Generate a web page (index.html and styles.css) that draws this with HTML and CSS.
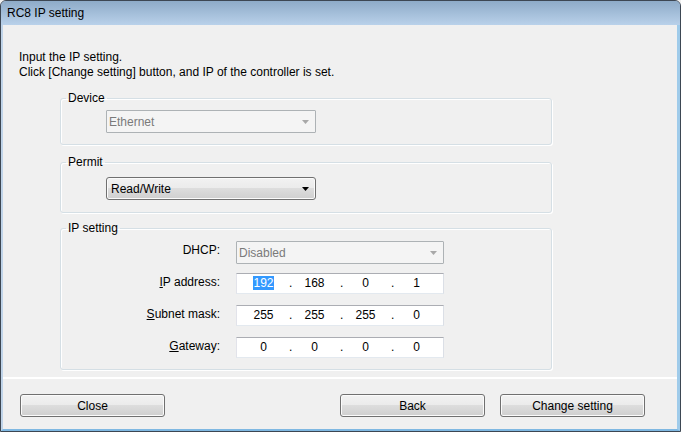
FILE: index.html
```html
<!DOCTYPE html>
<html>
<head>
<meta charset="utf-8">
<title>RC8 IP setting</title>
<link rel="stylesheet" href="styles.css">
</head>
<body>
<div class="window">
  <div class="titlebar">RC8 IP setting</div>
  <div class="client">
    <div class="main">
      <p class="intro">Input the IP setting.<br>Click [Change setting] button, and IP of the controller is set.</p>

      <fieldset class="group group-device">
        <legend>Device</legend>
        <div class="group-body body-device">
          <div class="combo combo-disabled combo-wide">
            <span class="combo-text">Ethernet</span>
            <svg class="arrow" width="7" height="4" viewBox="0 0 7 4"><path d="M0 0H7L3.5 4Z"/></svg>
          </div>
        </div>
      </fieldset>

      <fieldset class="group group-permit">
        <legend>Permit</legend>
        <div class="group-body body-permit">
          <div class="combo combo-list combo-wide">
            <span class="combo-text">Read/Write</span>
            <svg class="arrow" width="7" height="4" viewBox="0 0 7 4"><path d="M0 0H7L3.5 4Z"/></svg>
          </div>
        </div>
      </fieldset>

      <fieldset class="group group-ip">
        <legend>IP setting</legend>
        <div class="group-body body-ip">
          <div class="field-label">DHCP:</div>
          <div class="combo combo-disabled combo-ip">
            <span class="combo-text">Disabled</span>
            <svg class="arrow" width="7" height="4" viewBox="0 0 7 4"><path d="M0 0H7L3.5 4Z"/></svg>
          </div>

          <div class="field-label"><u>I</u>P address:</div>
          <div class="ipfield">
            <span class="octet"><span class="selected">192</span></span><span class="dot">.</span>
            <span class="octet">168</span><span class="dot">.</span>
            <span class="octet">0</span><span class="dot">.</span>
            <span class="octet">1</span>
          </div>

          <div class="field-label"><u>S</u>ubnet mask:</div>
          <div class="ipfield">
            <span class="octet">255</span><span class="dot">.</span>
            <span class="octet">255</span><span class="dot">.</span>
            <span class="octet">255</span><span class="dot">.</span>
            <span class="octet">0</span>
          </div>

          <div class="field-label"><u>G</u>ateway:</div>
          <div class="ipfield">
            <span class="octet">0</span><span class="dot">.</span>
            <span class="octet">0</span><span class="dot">.</span>
            <span class="octet">0</span><span class="dot">.</span>
            <span class="octet">0</span>
          </div>
        </div>
      </fieldset>
    </div>

    <div class="footer">
      <button class="btn">Close</button>
      <div class="footer-right">
        <button class="btn">Back</button>
        <button class="btn">Change setting</button>
      </div>
    </div>
  </div>
</div>
</body>
</html>
```

FILE: styles.css
```css
* {
  box-sizing: border-box;
}

html, body {
  margin: 0;
  padding: 0;
}

body {
  width: 681px;
  height: 432px;
  overflow: hidden;
  font-family: "Liberation Sans", Arial, sans-serif;
  font-size: 12px;
  color: #000;
  background: #f0f0f0;
}

.window {
  width: 681px;
  height: 432px;
  display: flex;
  flex-direction: column;
  border: 1px solid #3d4753;
  border-radius: 6px 6px 0 0;
  overflow: hidden;
  background: #bcd1e7;
}

.titlebar {
  height: 24px;
  flex: none;
  padding: 1px 0 0 6px;
  line-height: 23px;
  background: linear-gradient(#8eabc8, #b9d1ea);
  color: #000;
}

.client {
  flex: 1;
  display: flex;
  flex-direction: column;
  background: #f0f0f0;
  border-left: 2px solid #c0d4e9;
  border-right: 3px solid #9fcbea;
  border-bottom: 2px solid #7fb8e2;
}

.main {
  flex: 1;
  padding: 25px 0 0 16px;
}

.intro {
  margin: 0 0 11px 0;
  line-height: 15px;
}

.group {
  margin: 0 0 0 41px;
  width: 492px;
  padding: 0;
  border: 1px solid #d5dfe5;
  border-radius: 3px;
  box-shadow: inset 1px 1px 0 #fff, 1px 1px 0 #fff;
  min-width: 0;
}

.group legend {
  margin-left: 5px;
  padding: 0 2px;
  line-height: 15px;
}

.group-permit {
  margin-top: 10px;
}

.group-ip {
  margin-top: 8px;
}

.body-device {
  padding: 4px 0 11px 45px;
}

.body-permit {
  padding: 7px 0 12px 45px;
}

.body-ip {
  padding: 5px 0 0 0;
  display: grid;
  grid-template-columns: 159px 208px;
  grid-auto-rows: 32px;
  column-gap: 16px;
  align-items: start;
}

.field-label {
  text-align: right;
  line-height: 19px;
}

.combo {
  display: flex;
  align-items: center;
  height: 23px;
}

.combo-wide {
  width: 210px;
}

.combo-ip {
  width: 208px;
}

.combo .arrow {
  margin-left: auto;
  margin-right: 6px;
}

.combo-disabled {
  border: 1px solid #adb2b5;
  border-radius: 1px;
  background: #f4f4f4;
  color: #7a7a7a;
  padding-left: 2px;
}

.combo-disabled .arrow path {
  fill: #a8a8a8;
}

.combo-list {
  border: 1px solid #707070;
  border-radius: 3px;
  background: linear-gradient(#f2f2f2 0%, #ebebeb 50%, #dddddd 50%, #cfcfcf 100%);
  box-shadow: inset 0 0 0 1px #fbfbfb;
  padding-left: 4px;
}

.combo-list .arrow path {
  fill: #000;
}

.ipfield {
  display: flex;
  width: 208px;
  height: 21px;
  background: #fff;
  border: 1px solid;
  border-color: #abadb3 #dbdfe6 #e3e9ef #e2e3ea;
  padding-left: 6px;
  line-height: 19px;
}

.octet {
  width: 41px;
  text-align: center;
  flex: none;
}

.dot {
  width: 10px;
  padding-left: 5px;
  flex: none;
}

.selected {
  background: #3399ff;
  color: #fff;
}

.footer {
  flex: none;
  height: 52px;
  border-top: 2px solid #fff;
  padding: 15px 32px 0 17px;
  display: flex;
  justify-content: space-between;
  align-items: flex-start;
}

.footer-right {
  display: flex;
  gap: 15px;
}

.btn {
  width: 145px;
  height: 23px;
  padding: 0;
  font-family: inherit;
  font-size: 12px;
  color: #000;
  border: 1px solid #707070;
  border-radius: 3px;
  background: linear-gradient(#f2f2f2 0%, #ebebeb 50%, #dddddd 50%, #cfcfcf 100%);
  box-shadow: inset 0 0 0 1px #fbfbfb;
}
```
